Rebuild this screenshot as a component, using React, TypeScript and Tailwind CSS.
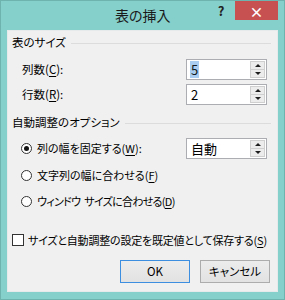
import type { ReactNode } from 'react';

const font = { fontFamily: '"Noto Sans CJK JP", "Noto Sans", sans-serif', fontFeatureSettings: '"palt"' };

function U({ children }: { children: ReactNode }) {
  return <span className="underline underline-offset-[2px] decoration-[1px]">{children}</span>;
}

function GroupHeader({ title }: { title: string }) {
  return (
    <div className="flex h-[16px] items-center">
      <span className="leading-none">{title}</span>
      <div className="ml-[5px] mr-[6px] h-px flex-1 bg-[#dcdcdc]" />
    </div>
  );
}

function SpinBox({ value, selected }: { value: string; selected?: boolean }) {
  return (
    <div className="flex h-[21px] w-[81px] border border-[#abadb3] bg-white">
      <div className="flex flex-1 items-center pl-[3px] text-[13px] leading-none">
        <span className={selected ? 'bg-[#a9cdf0] px-px py-[2px] text-[#101820]' : 'px-px'}>{value}</span>
      </div>
      <div className="flex w-[17px] flex-col p-px">
        <div className="flex flex-1 items-center justify-center border border-[#cfcfcf] bg-[#ececec]">
          <div className="h-0 w-0 border-x-[3px] border-b-[3px] border-x-transparent border-b-[#1e1e1e]" />
        </div>
        <div className="flex flex-1 items-center justify-center border border-t-0 border-[#cfcfcf] bg-[#ececec]">
          <div className="h-0 w-0 border-x-[3px] border-t-[3px] border-x-transparent border-t-[#1e1e1e]" />
        </div>
      </div>
    </div>
  );
}

function Radio({ checked }: { checked?: boolean }) {
  return (
    <div className="flex h-[11px] w-[11px] items-center justify-center rounded-full border border-[#333] bg-white">
      {checked && <div className="h-[5px] w-[5px] rounded-full bg-[#111]" />}
    </div>
  );
}

export default function App() {
  return (
    <div className="h-[300px] w-[285px] border border-[#6fb3af] bg-[#86d0cc] text-[11.5px] text-black" style={font}>
      <div className="flex h-[28px] items-start">
        <div className="flex h-[28px] flex-1 items-center pl-[114px]">
          <span className="text-[14px] text-[#1a1a1a]">表の挿入</span>
        </div>
        <div className="flex h-[20px] w-[18px] items-center justify-center text-[13px] font-bold text-[#222]">?</div>
        <div className="ml-[5px] mr-[6px] flex h-[19px] w-[43px] items-center justify-center bg-[#c75050] text-[14px] font-bold leading-none text-white">
          ×
        </div>
      </div>

      <div className="mx-[6px] mt-px flex h-[262px] flex-col border border-[#e6eaea] bg-[#f0f0f0] pl-[4px] pt-[4px]">
        <GroupHeader title="表のサイズ" />

        <div className="mt-[8px] flex h-[21px] items-center">
          <span className="ml-[10px] flex-1">
            列数(<U>C</U>):
          </span>
          <div className="mr-[10px]">
            <SpinBox value="5" selected />
          </div>
        </div>
        <div className="mt-[4px] flex h-[21px] items-center">
          <span className="ml-[10px] flex-1">
            行数(<U>R</U>):
          </span>
          <div className="mr-[10px]">
            <SpinBox value="2" />
          </div>
        </div>

        <div className="mt-[10px]">
          <GroupHeader title="自動調整のオプション" />
        </div>

        <div className="mt-[7px] flex h-[21px] items-center text-[11px]">
          <div className="ml-[9px]">
            <Radio checked />
          </div>
          <span className="ml-[5px] flex-1">
            列の幅を固定する(<U>W</U>):
          </span>
          <div className="mr-[10px] text-[12px]">
            <SpinBox value="自動" />
          </div>
        </div>
        <div className="mt-[6px] flex h-[21px] items-center text-[11px]">
          <div className="ml-[9px]">
            <Radio />
          </div>
          <span className="ml-[5px]">
            文字列の幅に合わせる(<U>F</U>)
          </span>
        </div>
        <div className="mt-[5px] flex h-[21px] items-center text-[11px]">
          <div className="ml-[9px]">
            <Radio />
          </div>
          <span className="ml-[5px] whitespace-nowrap tracking-[-0.7px]">
            ウィンドウ<span className="ml-[4px]">サイズに合わせる(<U>D</U>)</span>
          </span>
        </div>

        <div className="mt-[20px] flex h-[16px] items-center text-[11px]">
          <div className="h-[12px] w-[12px] shrink-0 border border-[#333] bg-white" />
          <span className="ml-[4px] whitespace-nowrap tracking-[-0.2px]">
            サイズと自動調整の設定を既定値として保存する(<U>S</U>)
          </span>
        </div>

        <div className="mt-[12px] flex justify-end gap-[10px] pr-[7px]">
          <div className="flex h-[23px] w-[70px] items-center justify-center border border-[#3c8fe0] bg-gradient-to-b from-[#ececec] to-[#e2e2e2]">
            OK
          </div>
          <div className="flex h-[23px] w-[70px] items-center justify-center border border-[#acacac] bg-gradient-to-b from-[#ececec] to-[#e2e2e2]">
            キャンセル
          </div>
        </div>
      </div>
    </div>
  );
}
